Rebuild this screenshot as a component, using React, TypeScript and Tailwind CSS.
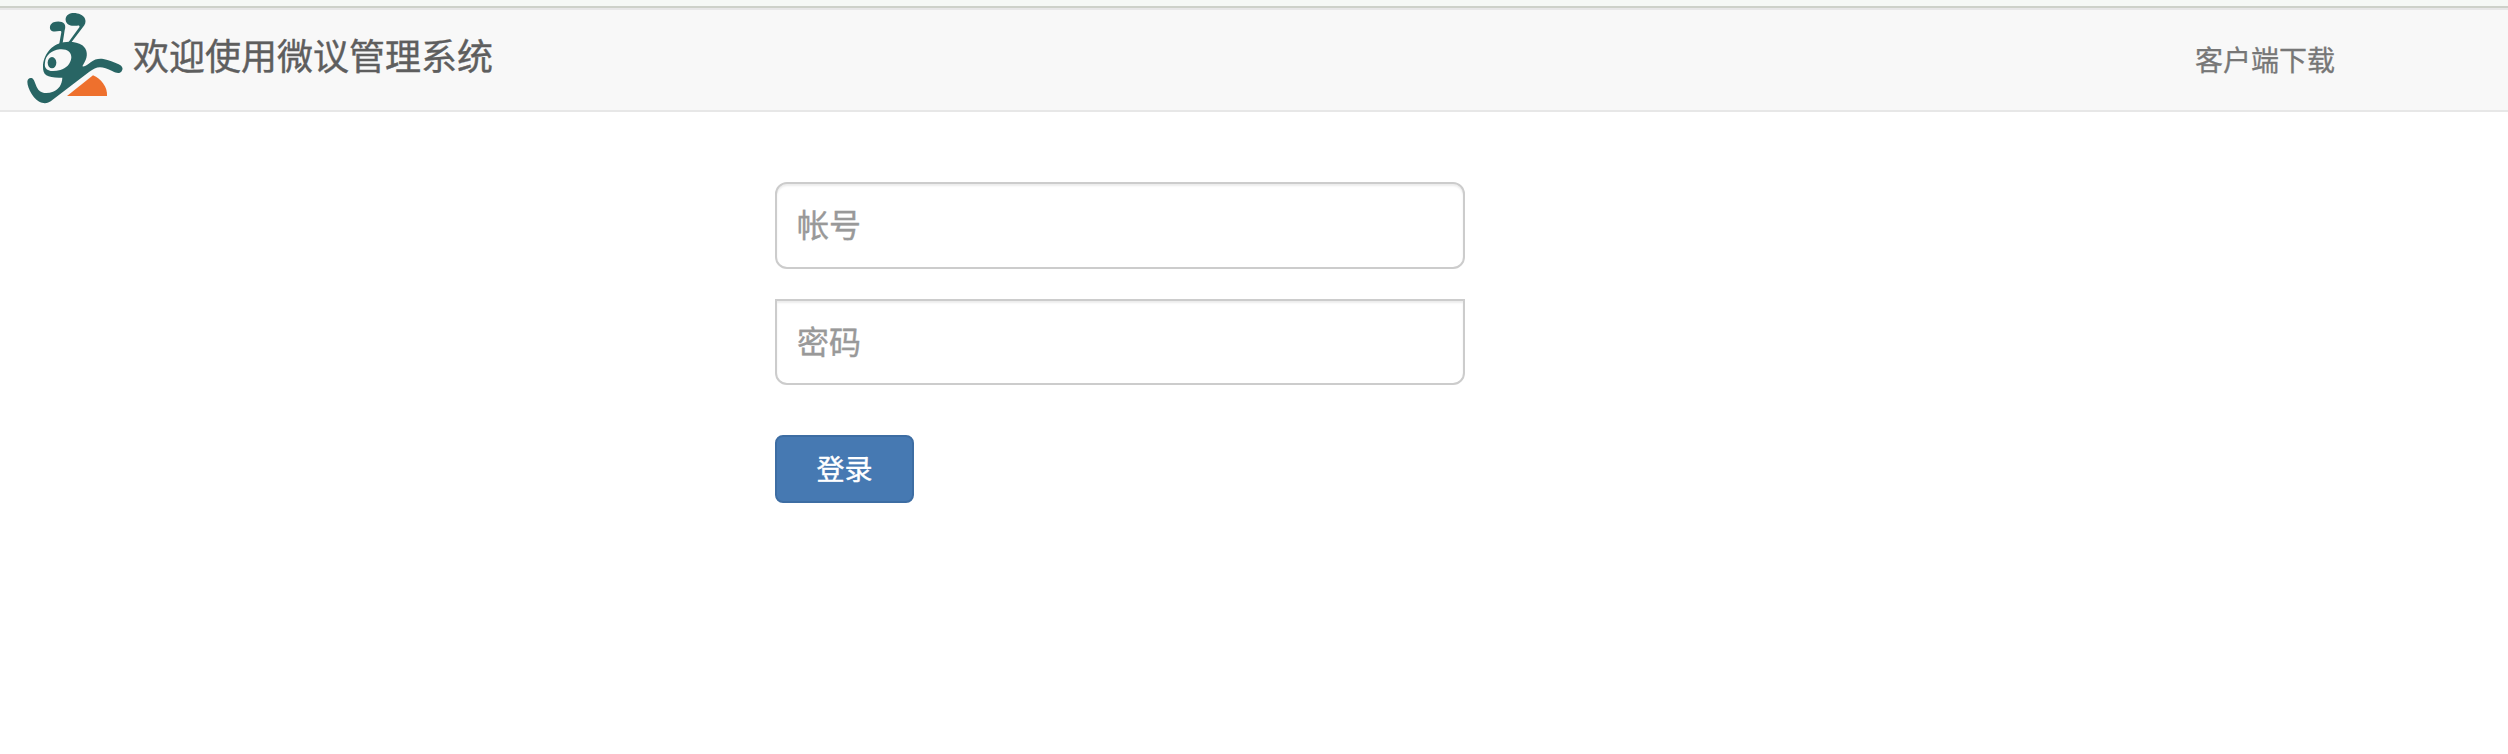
import React from 'react';

function Logo() {
  return (
    <svg className="block h-[105px] w-[110px] shrink-0" viewBox="0 0 330 315" aria-hidden="true">
      <g fill="#286564">
        <path d="M117 121 L124 82 C124 78 122 77 118 78 C107 80 97 81 92 75 C87 67 91 56 101 52 C112 48 127 49 133 56 C137 62 136 69 134 76 L127 121 Z" />
        <path d="M141 118 L178 67 C180 63 177 61 172 62 C158 64 143 61 138 50 C134 38 141 28 153 25 C170 22 189 29 195 41 C199 50 195 59 189 66 L152 115 Z" />
        <path d="M69 186 C69 151 94 118 131 112 C150 108 172 111 187 121 C203 134 204 153 194 171 L187 184 C196 186 203 178 212 172 C224 163 235 160 250 162 C267 165 282 172 296 178 C308 184 311 192 304 200 C298 206 288 204 278 199 C262 191 250 187 240 187 C229 187 219 193 208 200 L98 284 C88 292 78 297 66 293 C53 290 43 279 35 267 C27 253 22 240 22 230 C23 221 29 217 37 220 C45 226 46 242 55 254 C65 266 83 267 99 260 C117 252 126 239 127 218 C106 219 88 217 79 211 C71 205 69 196 69 186 Z" />
      </g>
      <path fill="#f8f8f8" d="M75 173 C76 151 95 136 119 133 C141 131 155 142 154 158 C152 177 138 190 121 195 C102 200 84 200 77 189 C74 184 74 179 75 173 Z" />
      <ellipse cx="96" cy="173" rx="13" ry="17" fill="#286564" />
      <path fill="#ee702d" d="M141 273 L219 211 C244 222 263 247 261 273 Z" />
    </svg>
  );
}

const inputClass =
  'block w-full border-2 border-[#cccccc] bg-white px-5 pb-[5px] text-[32px] shadow-[inset_0_2px_2px_rgba(0,0,0,0.075)] [-webkit-text-stroke:0.4px_#999999] placeholder:text-[#999999]';

export default function App() {
  return (
    <div className="min-h-[754px] w-full bg-white font-['Noto_Sans_CJK_SC',sans-serif]">
      <div className="h-2 border-b-2 border-[#cdd1c9] bg-[#f5f8f5]" />
      <header className="flex h-[104px] items-start justify-between border-y-2 border-[#e7e7e7] bg-[#f8f8f8] pl-5 pr-[173px]">
        <div className="-mt-[5px] flex items-start">
          <Logo />
          <h1 className="ml-[3px] mt-6 text-[36px] leading-[50px] text-[#5e5e5e] [-webkit-text-stroke:0.4px_#5e5e5e]">
            欢迎使用微议管理系统
          </h1>
        </div>
        <a href="#download" className="mt-[29px] text-[28px] leading-10 text-[#777777] [-webkit-text-stroke:0.3px_#777777]">
          客户端下载
        </a>
      </header>
      <form className="ml-[775px] flex w-[690px] flex-col items-start pt-[70px]">
        <input type="text" placeholder="帐号" className={`${inputClass} h-[87px] rounded-xl`} />
        <input type="password" placeholder="密码" className={`${inputClass} mt-[30px] h-[86px] rounded-b-xl`} />
        <button
          type="button"
          className="mt-[50px] flex h-[68px] w-[139px] items-center justify-center rounded-lg border-2 border-[#3d6da3] bg-[#4679b2] pb-[2px] text-[28px] leading-10 text-white [-webkit-text-stroke:0.4px_#ffffff]"
        >
          登录
        </button>
      </form>
    </div>
  );
}
